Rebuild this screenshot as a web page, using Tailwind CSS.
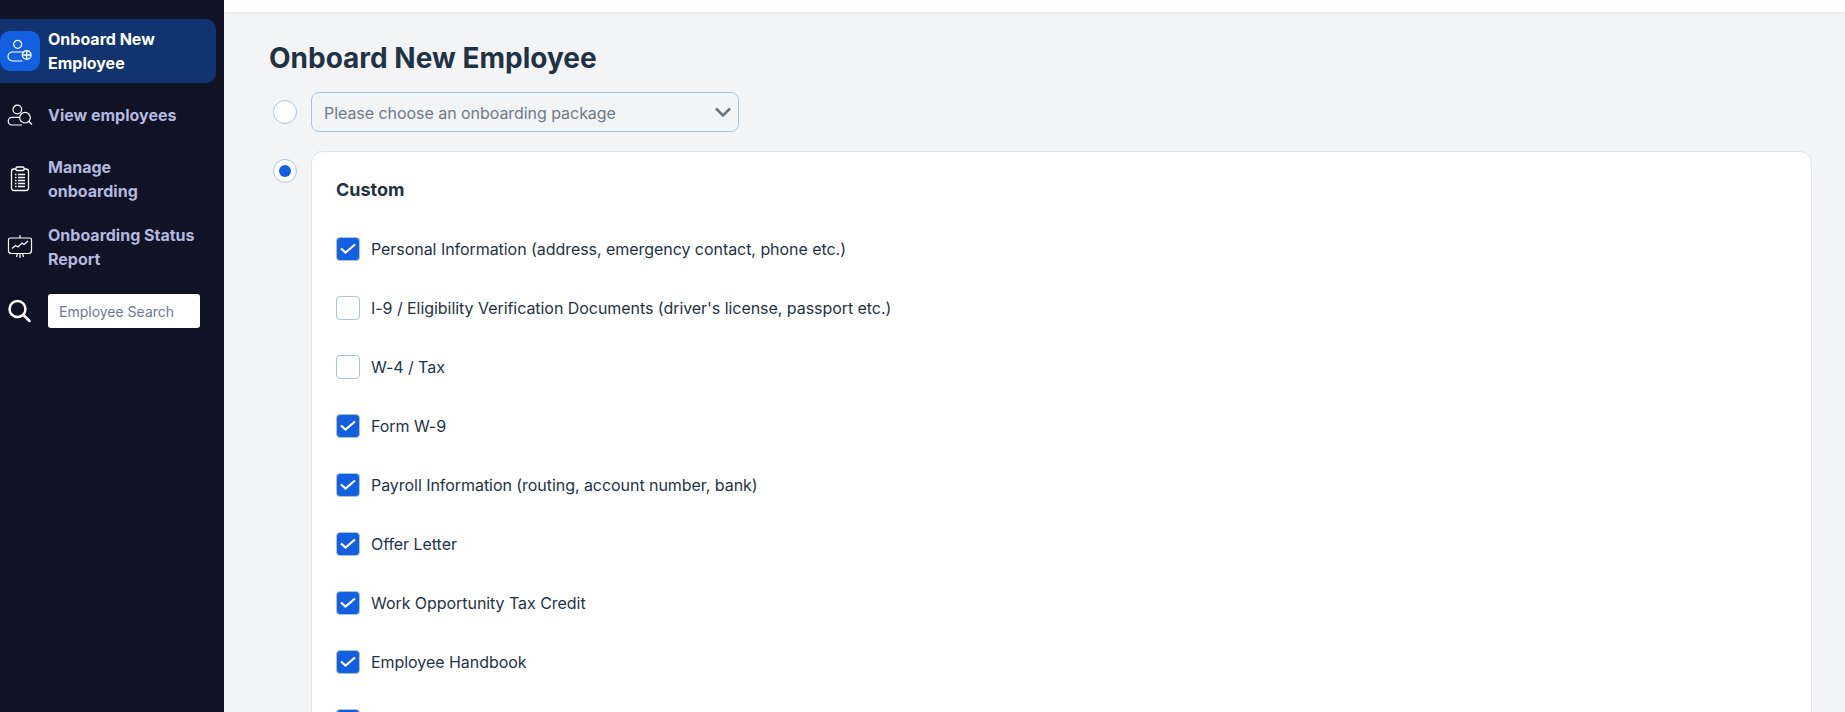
<!doctype html>
<html>
<head>
  <meta charset="UTF-8">
  <meta name="viewport" content="width=device-width, initial-scale=1.0">
  <script src="https://cdn.jsdelivr.net/npm/@tailwindcss/browser@4"></script>
</head>
<body class="h-screen overflow-hidden flex font-['Inter',sans-serif] bg-[#f3f4f6]">
  <!-- sidebar -->
  <aside class="w-[224px] h-full shrink-0 bg-[#101226] pt-[19px] pr-2">
    <a class="flex items-center h-[64px] rounded-r-[10px] bg-[#11336f] text-white font-bold text-[16px] leading-[24px]">
      <span class="w-[40px] h-[40px] rounded-[10px] bg-[#1260e0] flex items-center justify-center shrink-0 text-white">
        <svg width="26" height="24" viewBox="0 0 26 24" fill="none" stroke="currentColor" stroke-width="1.200">
          <circle cx="10.700" cy="5.300" r="4"/>
          <path d="M15.500 22H5.500a4.500 4.500 0 0 1 0-9H17"/>
          <circle cx="19.700" cy="16" r="4.300" stroke-width="1.400"/>
          <path d="M19.700 12.500v7M16.200 16h7" stroke-width="1.400"/>
        </svg>
      </span>
      <span class="ml-2">Onboard New<br>Employee</span>
    </a>
    <a class="flex items-center h-[64px] text-[#b2b8de] font-bold text-[16px] leading-[24px]">
      <span class="w-[40px] flex justify-center shrink-0 text-white">
        <svg width="26" height="24" viewBox="0 0 26 24" fill="none" stroke="currentColor" stroke-width="1.200">
          <circle cx="10.300" cy="6.500" r="4.300"/>
          <path d="M15 22H5a3.800 3.800 0 0 1 0-7.600H13"/>
          <circle cx="18" cy="14.700" r="5.300"/>
          <path d="M22 18.500l3 3"/>
        </svg>
      </span>
      <span class="ml-2">View employees</span>
    </a>
    <a class="flex items-center h-[64px] text-[#b2b8de] font-bold text-[16px] leading-[24px]">
      <span class="w-[40px] flex justify-center shrink-0 text-white">
        <svg width="20" height="26" viewBox="0 0 20 26" fill="none" stroke="currentColor" stroke-width="1.300">
          <rect x="1.500" y="3" width="17" height="21.500" rx="2.500"/>
          <rect x="6" y="1" width="8" height="3.500" rx="1" fill="#101226"/>
          <path d="M5 8.500h1.500M8 8.500h7M5 11.500h1.500M8 11.500h7M5 14.500h1.500M8 14.500h7M5 17.500h1.500M8 17.500h7M5 20.500h1.500M8 20.500h7"/>
        </svg>
      </span>
      <span class="ml-2">Manage<br>onboarding</span>
    </a>
    <a class="flex items-center h-[64px] mt-[4px] text-[#b2b8de] font-bold text-[16px] leading-[24px]">
      <span class="w-[40px] flex justify-center shrink-0 text-white">
        <svg width="26" height="26" viewBox="0 0 26 26" fill="none" stroke="currentColor" stroke-width="1.200">
          <path d="M13 1v3"/>
          <path d="M1.500 5.500c0-1 1-1.500 2-1.500h19c1 0 2 .5 2 1.500v11c0 2-1 3-3 3h-17c-2 0-3-1-3-3z"/>
          <path d="M5 14.500l3.500-3 2.500 1.500 4-4 2 1.500 4-3.500"/>
          <path d="M9.500 23l1-3.500M13 24v-4.500M16.500 23l-1-3.500"/>
        </svg>
      </span>
      <span class="ml-2">Onboarding Status<br>Report</span>
    </a>
    <div class="flex items-center mt-[15px]">
      <span class="w-[40px] flex justify-center shrink-0 text-white -translate-x-[1px]">
        <svg width="24" height="24" viewBox="0 0 24 24" fill="none" stroke="currentColor" stroke-width="2.500" stroke-linecap="round">
          <circle cx="10.500" cy="10" r="8"/>
          <path d="M16.500 16l6 6"/>
        </svg>
      </span>
      <div class="ml-2 w-[152px] h-[34px] bg-white rounded-[3px] pl-[11px] flex items-center text-[14px] text-[#6b7a90]">Employee Search</div>
    </div>
  </aside>

  <div class="flex-1 min-w-0 h-full flex flex-col">
    <div class="h-[12px] bg-white shrink-0 shadow-[0_1px_4px_rgba(0,0,0,0.05)]"></div>
    <main class="flex-1 pl-[45px] pr-[33px] pt-[29px]">
      <h1 class="text-[28px] leading-[34px] font-bold text-[#1f3344]">Onboard New Employee</h1>

      <div class="flex items-center mt-[17px]">
        <span class="w-[24px] h-[24px] rounded-full bg-white border border-[#a9c3dc] ml-[4px]"></span>
        <div class="ml-[14px] w-[428px] h-[40px] border border-[#a9c3dc] rounded-[8px] flex items-center justify-between pl-[12px] pr-[6px] text-[16px] tracking-[-0.05px] text-[#6f7b87]">
          <span class="translate-y-[1px]">Please choose an onboarding package</span>
          <svg width="18" height="12" viewBox="0 0 18 12" fill="none" stroke="#6c757d" stroke-width="2.600"><path d="M2 2.500l7 7 7-7"/></svg>
        </div>
      </div>

      <div class="flex items-start mt-[19px]">
        <span class="w-[24px] h-[24px] mt-[8px] rounded-full bg-white border border-[#a9c3dc] ml-[4px] flex items-center justify-center">
          <span class="w-[12px] h-[12px] rounded-full bg-[#1260e0]"></span>
        </span>
        <section class="ml-[14px] flex-1 h-[700px] bg-white border border-[#e2e4e8] rounded-[12px] pl-[24px] pt-[26px]">
          <h2 class="text-[18px] leading-[24px] font-bold text-[#1f3344]">Custom</h2>
          <ul class="mt-[35px] flex flex-col gap-[35px] text-[16px] leading-[24px] tracking-[-0.05px] text-[#1f3344]">
            <li class="flex items-center gap-[11px]">
              <span class="w-[24px] h-[24px] rounded-[4px] bg-[#1260e0] border border-[#a9c3dc] flex items-center justify-center"><svg width="18" height="12" viewBox="0 0 18 12" fill="none" stroke="white" stroke-width="2.200"><path d="M2 5.500l4.500 4L16 1.500"/></svg></span>
              Personal Information (address, emergency contact, phone etc.)
            </li>
            <li class="flex items-center gap-[11px]">
              <span class="w-[24px] h-[24px] rounded-[4px] bg-white border border-[#a9c3dc]"></span>
              I-9 / Eligibility Verification Documents (driver's license, passport etc.)
            </li>
            <li class="flex items-center gap-[11px]">
              <span class="w-[24px] h-[24px] rounded-[4px] bg-white border border-[#a9c3dc]"></span>
              W-4 / Tax
            </li>
            <li class="flex items-center gap-[11px]">
              <span class="w-[24px] h-[24px] rounded-[4px] bg-[#1260e0] border border-[#a9c3dc] flex items-center justify-center"><svg width="18" height="12" viewBox="0 0 18 12" fill="none" stroke="white" stroke-width="2.200"><path d="M2 5.500l4.500 4L16 1.500"/></svg></span>
              Form W-9
            </li>
            <li class="flex items-center gap-[11px]">
              <span class="w-[24px] h-[24px] rounded-[4px] bg-[#1260e0] border border-[#a9c3dc] flex items-center justify-center"><svg width="18" height="12" viewBox="0 0 18 12" fill="none" stroke="white" stroke-width="2.200"><path d="M2 5.500l4.500 4L16 1.500"/></svg></span>
              Payroll Information (routing, account number, bank)
            </li>
            <li class="flex items-center gap-[11px]">
              <span class="w-[24px] h-[24px] rounded-[4px] bg-[#1260e0] border border-[#a9c3dc] flex items-center justify-center"><svg width="18" height="12" viewBox="0 0 18 12" fill="none" stroke="white" stroke-width="2.200"><path d="M2 5.500l4.500 4L16 1.500"/></svg></span>
              Offer Letter
            </li>
            <li class="flex items-center gap-[11px]">
              <span class="w-[24px] h-[24px] rounded-[4px] bg-[#1260e0] border border-[#a9c3dc] flex items-center justify-center"><svg width="18" height="12" viewBox="0 0 18 12" fill="none" stroke="white" stroke-width="2.200"><path d="M2 5.500l4.500 4L16 1.500"/></svg></span>
              Work Opportunity Tax Credit
            </li>
            <li class="flex items-center gap-[11px]">
              <span class="w-[24px] h-[24px] rounded-[4px] bg-[#1260e0] border border-[#a9c3dc] flex items-center justify-center"><svg width="18" height="12" viewBox="0 0 18 12" fill="none" stroke="white" stroke-width="2.200"><path d="M2 5.500l4.500 4L16 1.500"/></svg></span>
              Employee Handbook
            </li>
            <li class="flex items-center gap-[11px]">
              <span class="w-[24px] h-[24px] rounded-[4px] bg-[#1260e0] border border-[#a9c3dc] flex items-center justify-center"></span>
            </li>
          </ul>
        </section>
      </div>
    </main>
  </div>
</body>
</html>
